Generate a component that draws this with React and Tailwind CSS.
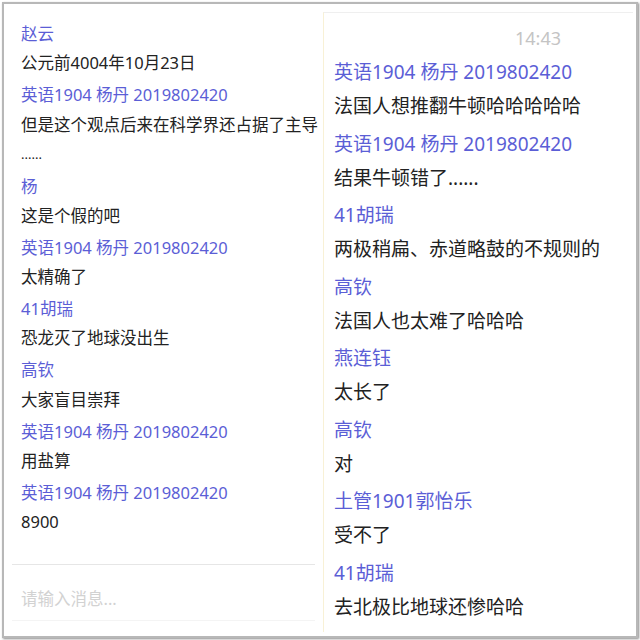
const leftMessages = [
  { name: "赵云", text: "公元前4004年10月23日" },
  { name: "英语1904 杨丹 2019802420", text: "但是这个观点后来在科学界还占据了主导", more: "......" },
  { name: "杨", text: "这是个假的吧" },
  { name: "英语1904 杨丹 2019802420", text: "太精确了" },
  { name: "41胡瑞", text: "恐龙灭了地球没出生" },
  { name: "高钦", text: "大家盲目崇拜" },
  { name: "英语1904 杨丹 2019802420", text: "用盐算" },
  { name: "英语1904 杨丹 2019802420", text: "8900" },
];

const rightMessages = [
  { name: "英语1904 杨丹 2019802420", text: "法国人想推翻牛顿哈哈哈哈哈" },
  { name: "英语1904 杨丹 2019802420", text: "结果牛顿错了......" },
  { name: "41胡瑞", text: "两极稍扁、赤道略鼓的不规则的" },
  { name: "高钦", text: "法国人也太难了哈哈哈" },
  { name: "燕连钰", text: "太长了" },
  { name: "高钦", text: "对" },
  { name: "土管1901郭怡乐", text: "受不了" },
  { name: "41胡瑞", text: "去北极比地球还惨哈哈" },
];

const font = { fontFamily: '"Noto Sans", "Noto Sans CJK SC", sans-serif' };

const App = () => {
  return (
    <div className="w-[640px] h-[640px] bg-white p-[2px]" style={font}>
      <div className="h-full flex border-2 border-[#b8b8b8] shadow-[1px_1px_2px_#8c8c8c] bg-white">
        {/* left chat */}
        <div className="w-[319px] flex flex-col">
          <div className="pl-[17px] pt-[12px] text-[16.5px] whitespace-nowrap">
            {leftMessages.map((m, i) => (
              <div key={i}>
                <div className="pt-[4px] leading-[28.3px] text-[#5b5ed6]">{m.name}</div>
                <div className="leading-[29px] text-[#222]">{m.text}</div>
                {m.more && <div className="leading-[30px] text-[#222] text-[13px]">{m.more}</div>}
              </div>
            ))}
          </div>
          <div className="mx-[8px] mt-[28px] border-t border-[#e6e6e6]" />
          <div className="mx-[8px] mt-[4px] pl-[9px] pt-[15px] h-[52px] leading-[30px] text-[16.5px] text-[#d2d2d2] border-b border-[#f4f4f4]">
            请输入消息...
          </div>
        </div>

        {/* right chat */}
        <div className="flex-1 mt-[8px] mb-[4px] mr-[3px] border-l border-t border-l-[#f8f1d6] border-t-[#efefef] flex flex-col">
          <div className="pt-[13px] pl-[191px] leading-[24px] text-[18px] text-[#c4c4c4]">14:43</div>
          <div className="pl-[10px] pt-[2px] text-[19px] whitespace-nowrap">
            {rightMessages.map((m, i) => (
              <div key={i}>
                <div className="pt-[4px] leading-[33px] text-[#5b5ed6]">{m.name}</div>
                <div className="leading-[34.5px] text-[#222]">{m.text}</div>
              </div>
            ))}
          </div>
        </div>
      </div>
    </div>
  );
};

export default App;
